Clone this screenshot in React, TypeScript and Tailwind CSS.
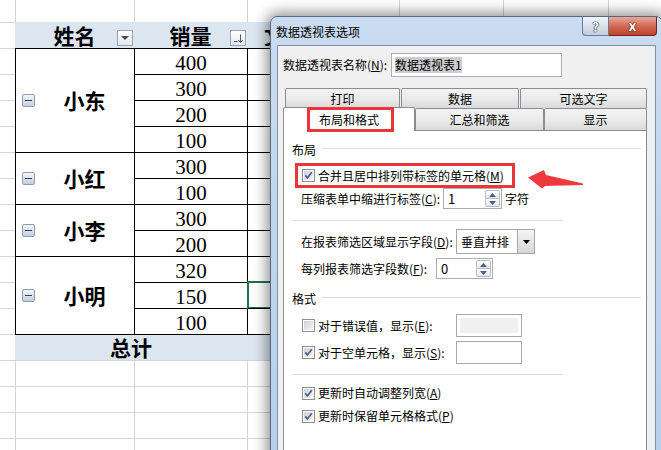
import React from "react";

const groups = [
  { name: "小东", h: "h-[104px]", values: ["400", "300", "200", "100"] },
  { name: "小红", h: "h-[52px]", values: ["300", "100"] },
  { name: "小李", h: "h-[52px]", values: ["300", "200"] },
  { name: "小明", h: "h-[78px]", values: ["320", "150", "100"] },
];
const allValues = groups.flatMap((g) => g.values);

function MinusBox() {
  return (
    <div className="ml-[6px] w-[13px] h-[13px] shrink-0 rounded-[2px] border border-[#8d9bb5] bg-linear-to-b from-[#f4f6fa] to-[#c6cedd] flex items-center justify-center">
      <div className="w-[7px] h-[1px] bg-[#34436a]" />
    </div>
  );
}

function FilterBtn({ sort }: { sort?: boolean }) {
  return (
    <div className="absolute right-[1px] top-[8px] w-[16px] h-[16px] border border-[#9aa3b0] bg-linear-to-b from-white to-[#e4e7ec] flex items-center justify-center">
      {sort ? (
        <svg width="14" height="14" viewBox="0 0 14 14">
          <path d="M3 10.5H6.5" stroke="#555" strokeWidth="1" fill="none" />
          <path d="M9.5 3.5V11" stroke="#555" strokeWidth="1" fill="none" />
          <path d="M7.5 9L9.5 11.5L11.5 9" stroke="#555" strokeWidth="1" fill="none" />
        </svg>
      ) : (
        <svg width="8" height="4" viewBox="0 0 8 4">
          <path d="M0 0H8L4 4Z" fill="#4a4a4a" />
        </svg>
      )}
    </div>
  );
}

function Sheet() {
  return (
    <div className="flex flex-col text-black">
      {/* top empty row */}
      <div className="flex h-[22px]">
        <div className="w-[15px]" />
        <div className="w-[119px] border-l border-[#d4d4d4]" />
        <div className="w-[113px] border-l border-[#d4d4d4]" />
        <div className="w-[152px] border-l border-[#d4d4d4]" />
        <div className="w-[104px] border-l border-[#d4d4d4]" />
        <div className="w-[105px] border-l border-[#d4d4d4]" />
        <div className="flex-1 border-l border-[#d4d4d4]" />
      </div>
      {/* header row */}
      <div className="flex h-[26px]">
        <div className="w-[15px] border-t border-[#d4d4d4]" />
        <div className="flex-1 flex bg-[#dce6f1] font-['Noto_Sans_CJK_SC',sans-serif] font-bold text-[21px] leading-none">
          <div className="relative w-[119px] flex items-center justify-center">
            姓名
            <FilterBtn />
          </div>
          <div className="relative w-[113px] flex items-center justify-center">
            销量
            <FilterBtn sort />
          </div>
          <div className="w-[23px] overflow-hidden flex items-center pl-[17px]">
            <span className="block w-[6px] overflow-hidden">文</span>
          </div>
        </div>
      </div>
      {/* body */}
      <div className="flex">
        <div className="w-[15px] flex flex-col">
          {allValues.map((_, i) => (
            <div key={i} className="h-[26px] border-t border-[#d4d4d4]" />
          ))}
        </div>
        <div className="w-[119px] border-l border-black flex flex-col">
          {groups.map((gr) => (
            <div key={gr.name} className={`${gr.h} border-t border-black flex items-center`}>
              <MinusBox />
              <div className="flex-1 text-center font-['Noto_Sans_CJK_SC',sans-serif] font-bold text-[21px] leading-none">
                {gr.name}
              </div>
            </div>
          ))}
        </div>
        <div className="w-[113px] border-l border-black flex flex-col">
          {allValues.map((v, i) => (
            <div
              key={i}
              className="h-[26px] border-t border-black flex items-center justify-center pt-[3px] font-['Liberation_Serif',serif] text-[21px] leading-none"
            >
              {v}
            </div>
          ))}
        </div>
        <div className="flex-1 border-l border-black flex flex-col">
          {allValues.map((_, i) =>
            i === 9 ? (
              <div key={i} className="h-[26px] border-t border-black outline-2 outline-[#217346] -outline-offset-1" />
            ) : (
              <div key={i} className="h-[26px] border-t border-black" />
            )
          )}
        </div>
      </div>
      {/* total row */}
      <div className="flex h-[26px]">
        <div className="w-[15px] border-t border-[#d4d4d4]" />
        <div className="flex-1 border-t border-black bg-[#dce6f1] flex">
          <div className="w-[232px] flex items-center justify-center font-['Noto_Sans_CJK_SC',sans-serif] font-bold text-[21px] leading-none">
            总计
          </div>
        </div>
      </div>
      {[0, 1, 2, 3].map((i) => (
        <div key={i} className="flex h-[26px]">
          <div className="w-[15px] border-t border-[#d4d4d4]" />
          <div className="w-[119px] border-t border-l border-[#d4d4d4]" />
          <div className="w-[113px] border-t border-l border-[#d4d4d4]" />
          <div className="flex-1 border-t border-l border-[#d4d4d4]" />
        </div>
      ))}
    </div>
  );
}

function Check({ checked }: { checked?: boolean }) {
  return (
    <div className="w-[13px] h-[13px] shrink-0 border border-[#8f8f8f] bg-white p-[1px]">
      <div className="relative w-full h-full bg-linear-to-br from-[#cdd0d5] to-[#f5f5f5]">
        {checked && (
          <svg className="absolute left-0 top-0" width="9" height="9" viewBox="0 0 9 9">
            <path d="M1.3 4.4L3.4 6.9L7.8 1.2" stroke="#4a5f94" strokeWidth="1.7" fill="none" />
          </svg>
        )}
      </div>
    </div>
  );
}

function Tri({ up, color }: { up?: boolean; color: string }) {
  return (
    <svg width="7" height="4" viewBox="0 0 7 4">
      <path d={up ? "M0 4H7L3.5 0Z" : "M0 0H7L3.5 4Z"} fill={color} />
    </svg>
  );
}

function Spin({ w, value }: { w: string; value: string }) {
  return (
    <div className={`${w} h-full border border-[#abadb3] bg-white flex`}>
      <div className="flex-1 pl-[4px] flex items-center text-[13px]">{value}</div>
      <div className="w-[16px] flex flex-col py-[1px] pr-[1px]">
        <div className="flex-1 border border-[#b9bdc4] rounded-t-[2px] bg-linear-to-b from-white to-[#e2e5ea] flex items-center justify-center">
          <Tri up color="#4b5d84" />
        </div>
        <div className="flex-1 border border-t-0 border-[#b9bdc4] rounded-b-[2px] bg-linear-to-b from-white to-[#e2e5ea] flex items-center justify-center">
          <Tri color="#4b5d84" />
        </div>
      </div>
    </div>
  );
}

function SectionHead({ label }: { label: string }) {
  return (
    <div className="h-[16px] flex items-start pl-[8px]">
      <span className="leading-[16px]">{label}</span>
      <div className="flex-1 ml-[6px] mr-[5px] mt-[6px] h-px bg-[#d5dfe5]" />
    </div>
  );
}

const tabBase =
  "border border-b-0 border-[#898c95] rounded-t-[2px] bg-linear-to-b from-[#f3f3f3] via-[#ebebeb] to-[#dadada] flex items-center justify-center";

function Dialog() {
  return (
    <div className="absolute z-10 left-[270px] top-[16px] w-[393px] h-[450px] rounded-t-[7px] border border-[#56687d] bg-linear-to-b from-[#cadcf1] to-[#b6cfeb] shadow-[0_0_14px_3px_rgba(0,0,0,0.45)] flex flex-col font-['Noto_Sans_CJK_SC',sans-serif] text-[12px] leading-[16px] text-black">
      {/* title bar */}
      <div className="h-[28px] flex items-start">
        <div className="pl-[5px] pt-[7px]">数据透视表选项</div>
        <div className="ml-auto mr-[5px] flex">
          <div className="w-[27px] h-[19px] rounded-bl-[4px] border border-t-0 border-[#6b7a8d] bg-linear-to-b from-[#f0f4f9] to-[#c2cedc] flex items-center justify-center text-white font-bold text-[13px] leading-none [text-shadow:0_0_1px_#1e2632,0_0_1px_#1e2632,0_0_1px_#1e2632]">
            ?
          </div>
          <div className="w-[48px] h-[19px] rounded-br-[4px] border border-t-0 border-l-0 border-[#6b2a20] bg-linear-to-b from-[#eaa898] via-[#d26a57] to-[#c0402b] flex items-center justify-center text-white font-bold text-[14px] leading-none pb-[2px] [text-shadow:0_0_1px_#3a0c06,0_0_1px_#3a0c06,0_0_1px_#3a0c06]">
            x
          </div>
        </div>
      </div>
      {/* client */}
      <div className="mx-[6px] flex-1 border border-[#7f92a8] bg-[#f0f0f0] flex flex-col">
        <div className="mt-[7px] pl-[5px] flex items-center">
          <div className="w-[108px]">
            数据透视表名称(<u>N</u>):
          </div>
          <div className="w-[171px] h-[24px] border border-[#abadb3] bg-white flex items-center pl-[3px]">
            <span className="bg-[#cdcdcd]">数据透视表1</span>
          </div>
        </div>
        {/* tabs */}
        <div className="mt-[11px] ml-[5px] w-[364px] flex flex-col">
          <div className="flex h-[20px] pl-[2px]">
            <div className={`w-[115px] ${tabBase}`}>打印</div>
            <div className={`ml-[1px] w-[118px] ${tabBase}`}>数据</div>
            <div className={`ml-[1px] w-[127px] ${tabBase}`}>可选文字</div>
          </div>
          <div className="flex h-[22px] items-end">
            <div className="relative z-10 -mb-px w-[132px] h-[24px] border border-b-0 border-[#898c95] rounded-t-[2px] bg-white flex items-center justify-center">
              布局和格式
              <div className="absolute left-[23px] -top-[1px] w-[87px] h-[25px] border-[3px] border-[#e8363b]" />
            </div>
            <div className={`w-[129px] h-[22px] ${tabBase}`}>汇总和筛选</div>
            <div className={`w-[103px] h-[22px] ${tabBase}`}>显示</div>
          </div>
          <div className="h-[330px] border border-[#898c95] bg-white flex flex-col">
            <div className="mt-[11px]">
              <SectionHead label="布局" />
            </div>
            <div className="mt-[5px] ml-[11px] w-[220px] h-[25px] border-[3px] border-[#e8363b] flex items-center pl-[4px]">
              <Check checked />
              <span className="ml-[3px]">
                合并且居中排列带标签的单元格(<u>M</u>)
              </span>
            </div>
            <div className="h-[21px] flex items-center pl-[17px]">
              <div className="w-[142px]">
                压缩表单中缩进行标签(<u>C</u>):
              </div>
              <Spin w="w-[59px]" value="1" />
              <span className="ml-[3px]">字符</span>
            </div>
            <div className="mt-[11px] ml-[8px] w-[271px] h-px bg-[#d5dfe5]" />
            <div className="mt-[8px] h-[25px] flex items-center pl-[17px]">
              <div className="w-[155px]">
                在报表筛选区域显示字段(<u>D</u>):
              </div>
              <div className="w-[79px] h-[25px] border border-[#a6a6a6] bg-white flex items-center">
                <div className="flex-1 pl-[4px]">垂直并排</div>
                <div className="w-[17px] h-full border-l border-[#a6a6a6] bg-linear-to-b from-[#f6f6f6] to-[#d6d6d6] flex items-center justify-center">
                  <Tri color="#000" />
                </div>
              </div>
            </div>
            <div className="mt-[4px] h-[21px] flex items-center pl-[17px]">
              <div className="w-[135px]">
                每列报表筛选字段数(<u>F</u>):
              </div>
              <Spin w="w-[57px]" value="0" />
            </div>
            <div className="mt-[12px]">
              <SectionHead label="格式" />
            </div>
            <div className="mt-[7px] h-[23px] flex items-center pl-[18px]">
              <Check />
              <div className="ml-[3px] w-[138px]">
                对于错误值，显示(<u>E</u>):
              </div>
              <div className="w-[66px] h-[23px] border border-[#a8a8a8] bg-white p-[3px]">
                <div className="w-full h-full bg-[#f0f0f0]" />
              </div>
            </div>
            <div className="mt-[4px] h-[23px] flex items-center pl-[18px]">
              <Check checked />
              <div className="ml-[3px] w-[138px]">
                对于空单元格，显示(<u>S</u>):
              </div>
              <div className="w-[66px] h-[23px] border border-[#a8a8a8] bg-white" />
            </div>
            <div className="mt-[10px] ml-[8px] w-[271px] h-px bg-[#d5dfe5]" />
            <div className="mt-[10px] h-[16px] flex items-center pl-[18px]">
              <Check checked />
              <span className="ml-[3px]">
                更新时自动调整列宽(<u>A</u>)
              </span>
            </div>
            <div className="mt-[7px] h-[16px] flex items-center pl-[18px]">
              <Check checked />
              <span className="ml-[3px]">
                更新时保留单元格格式(<u>P</u>)
              </span>
            </div>
          </div>
        </div>
      </div>
    </div>
  );
}

export default function App() {
  return (
    <div className="relative w-[661px] h-[450px] overflow-hidden bg-white">
      <Sheet />
      <Dialog />
      <svg className="absolute left-[525px] top-[165px] z-20" width="60" height="28" viewBox="0 0 60 28">
        <path d="M3 12.5L19 5L21 10L58 18.5L58 20L20 21L17 23.5Z" fill="#ee3a3f" />
      </svg>
    </div>
  );
}
